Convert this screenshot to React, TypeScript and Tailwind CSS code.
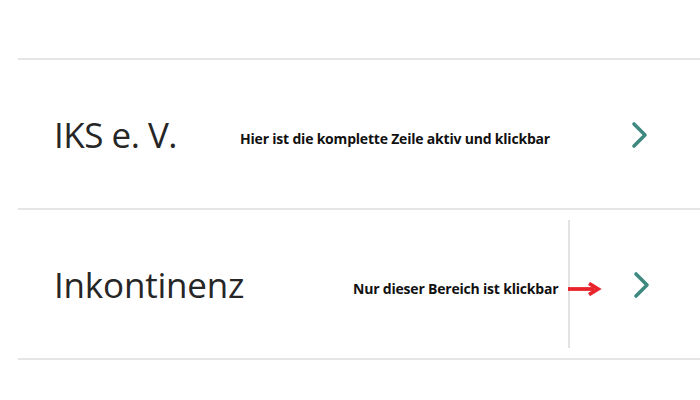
import React from "react";

function Chevron() {
  return (
    <svg width="18" height="28" viewBox="0 0 18 28" fill="none">
      <path d="M3 3 L14 14 L3 25" stroke="#3f8a80" strokeWidth="3.6" strokeLinecap="round" strokeLinejoin="round" />
    </svg>
  );
}

export default function App() {
  return (
    <div className="w-[700px] h-[400px] bg-white overflow-hidden" style={{ fontFamily: '"Open Sans", sans-serif' }}>
      <div className="pt-[58px] pl-[18px]">
        <div className="border-t-2 border-[#e6e6e6]">
          <div className="flex items-center h-[150px] border-b-2 border-[#e6e6e6]">
            <div className="w-[222px] pl-[36px] text-[35px] text-[#262626] leading-none tracking-[-0.5px]">IKS e. V.</div>
            <div className="pt-[8px] text-[14px] font-bold text-[#111] tracking-[-0.2px]">Hier ist die komplette Zeile aktiv und klickbar</div>
            <div className="ml-[81px] pt-[1px]"><Chevron /></div>
          </div>
          <div className="flex items-stretch h-[150px] border-b-2 border-[#e6e6e6]">
            <div className="flex items-center flex-1">
              <div className="w-[335px] pl-[36px] text-[35px] text-[#262626] leading-none tracking-[-0.2px]">Inkontinenz</div>
              <div className="pt-[8px] text-[14px] font-bold text-[#111] tracking-[-0.2px]">Nur dieser Bereich ist klickbar</div>
            </div>
            <div className="my-[10px] w-[132px] border-l-2 border-[#e2e2e2] relative flex items-center">
              <svg className="absolute left-[-2px] top-[62px]" width="34" height="14" viewBox="0 0 34 14">
                <path d="M0 7 H26" stroke="#e8232b" strokeWidth="3.8" />
                <path d="M21 1.5 L30 7 L21 12.5" stroke="#e8232b" strokeWidth="3.8" fill="none" strokeLinejoin="miter" />
              </svg>
              <div className="ml-[63px] pt-[1px]"><Chevron /></div>
            </div>
          </div>
        </div>
      </div>
    </div>
  );
}
